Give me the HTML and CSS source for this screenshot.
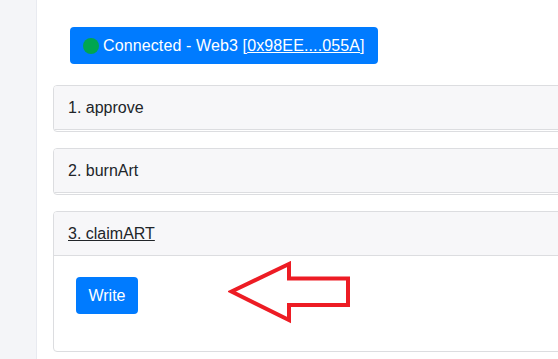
FILE: index.html
```html
<!DOCTYPE html>
<html>
<head>
<meta charset="utf-8">
<link rel="stylesheet" href="styles.css">
</head>
<body>
<div class="layout">
  <aside class="sidebar"></aside>
  <main class="main">
    <div class="connect-row">
      <button class="connect-btn"><span class="dot"></span>Connected - Web3 [<u>0x98EE....055A</u>]</button>
    </div>
    <div class="card">
      <div class="card-header">1. approve</div>
      <div class="card-spacer"></div>
    </div>
    <div class="card">
      <div class="card-header">2. burnArt</div>
      <div class="card-spacer"></div>
    </div>
    <div class="card">
      <div class="card-header"><u>3. claimART</u></div>
      <div class="card-body">
        <button class="write-btn">Write</button>
        <svg class="arrow" width="130" height="64" viewBox="0 0 130 64">
          <polygon points="3.5,30.5 61,3 61,17.5 120,17.5 120,44 61,44 61,59" fill="none" stroke="#ed1c24" stroke-width="4" stroke-linejoin="miter"/>
        </svg>
      </div>
    </div>
  </main>
</div>
</body>
</html>
```

FILE: styles.css
```css
html, body {
  margin: 0;
  padding: 0;
  background: #fff;
  overflow: hidden;
  font-family: "Liberation Sans", Arial, sans-serif;
  font-size: 16px;
  color: #212529;
}
.layout {
  display: flex;
  min-height: 359px;
}
.sidebar {
  width: 36px;
  flex: 0 0 36px;
  background: #f4f5f8;
  border-right: 1px solid #e8eaf0;
}
.main {
  flex: 1;
  padding: 27px 0 0 16px;
  min-width: 0;
}
.connect-row {
  padding-left: 17px;
  margin-bottom: 21px;
}
.connect-btn {
  display: inline-flex;
  align-items: center;
  height: 37px;
  padding: 0 13px 0 13px;
  background: #007bff;
  color: #fff;
  border: none;
  border-radius: 4px;
  font-family: "Liberation Sans", Arial, sans-serif;
  font-size: 16px;
  letter-spacing: 0.12px;
}
.connect-btn u {
  text-decoration: underline;
}
.dot {
  display: inline-block;
  width: 16px;
  height: 16px;
  border-radius: 50%;
  background: #00a650;
  margin-right: 4px;
}
.card {
  width: 560px;
  border: 1px solid #dcdde0;
  border-radius: 4px;
  margin-bottom: 16px;
  background: #fff;
  overflow: hidden;
}
.card-header {
  background: #f7f7f9;
  border-bottom: 1px solid #dcdde0;
  height: 43px;
  line-height: 43px;
  padding: 0 14px;
  color: #212529;
}
.card-spacer {
  height: 1px;
}
.card-body {
  position: relative;
  padding: 21px 22px 37px;
}
.write-btn {
  display: block;
  width: 62px;
  height: 37px;
  background: #007bff;
  color: #fff;
  border: none;
  border-radius: 4px;
  font-family: "Liberation Sans", Arial, sans-serif;
  font-size: 16px;
  padding: 0;
}
.arrow {
  position: absolute;
  left: 174px;
  top: 5px;
}
```
